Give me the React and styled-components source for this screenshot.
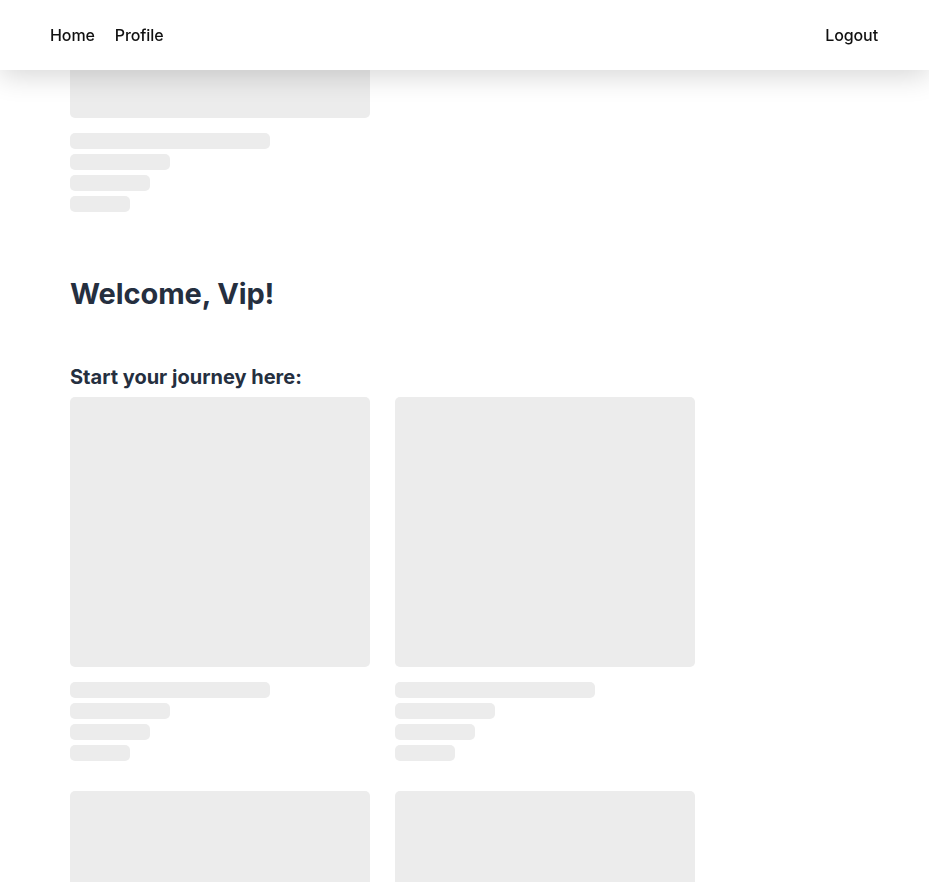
import React, { useEffect } from 'react';
import styled, { createGlobalStyle } from 'styled-components';

const GlobalStyle = createGlobalStyle`
    html, body {
        margin: 0;
        padding: 0;
        background: #ffffff;
    }

    body {
        font-family: Inter, "Noto Sans", "Liberation Sans", sans-serif;
        color: #252f3f;
    }
`;

const Header = styled.header`
    position: fixed;
    top: 0;
    left: 0;
    width: 100%;
    height: 70px;
    background: #ffffff;
    box-shadow: 0 6px 28px rgba(0, 0, 0, 0.16);
    display: flex;
    align-items: center;
    justify-content: space-between;
    padding: 0 51px 0 50px;
    box-sizing: border-box;
    z-index: 10;
`;

const Nav = styled.nav`
    display: flex;
    align-items: center;
    gap: 20px;
`;

const NavLink = styled.a`
    font-size: 16px;
    font-weight: 500;
    color: #111111;
    text-decoration: none;
    cursor: pointer;
    letter-spacing: -0.1px;
`;

const Page = styled.main`
    min-width: 1165px;
    padding: 283px 70px 17px;
    box-sizing: border-box;
`;

const Title = styled.h1`
    margin: 65px 0 0;
    font-size: 29px;
    line-height: 34px;
    font-weight: 700;
    color: #252f3f;
    letter-spacing: -0.1px;
`;

const Subtitle = styled.h2`
    margin: 54px 0 8px;
    font-size: 20px;
    line-height: 24px;
    font-weight: 700;
    color: #252f3f;
`;

const Grid = styled.div`
    display: grid;
    grid-template-columns: repeat(2, 300px);
    column-gap: 25px;
    row-gap: 30px;
`;

const Card = styled.div`
    display: flex;
    flex-direction: column;
    width: 300px;
`;

const Lines = styled.div`
    display: flex;
    flex-direction: column;
    gap: 5px;
    margin-top: 15px;
`;

const Bone = styled.div`
    width: ${p => p.$w}px;
    height: ${p => p.$h}px;
    background: #ececec;
    border-radius: 5px;
`;

const SkeletonCard = () => (
    <Card>
        <Bone $w={300} $h={270} />
        <Lines>
            <Bone $w={200} $h={16} />
            <Bone $w={100} $h={16} />
            <Bone $w={80} $h={16} />
            <Bone $w={60} $h={16} />
        </Lines>
    </Card>
);

const App = () => {
    // the page is shown part way down, past the first card
    useEffect(() => {
        window.scrollTo(0, 435);
    }, []);

    return (
        <>
            <GlobalStyle />
            <Header>
                <Nav>
                    <NavLink>Home</NavLink>
                    <NavLink>Profile</NavLink>
                </Nav>
                <NavLink>Logout</NavLink>
            </Header>
            <Page>
                <SkeletonCard />
                <Title>Welcome, Vip!</Title>
                <Subtitle>Start your journey here:</Subtitle>
                <Grid>
                    {Array.from({ length: 20 }).map((_, i) => <SkeletonCard key={i} />)}
                </Grid>
            </Page>
        </>
    );
};

export default App;
